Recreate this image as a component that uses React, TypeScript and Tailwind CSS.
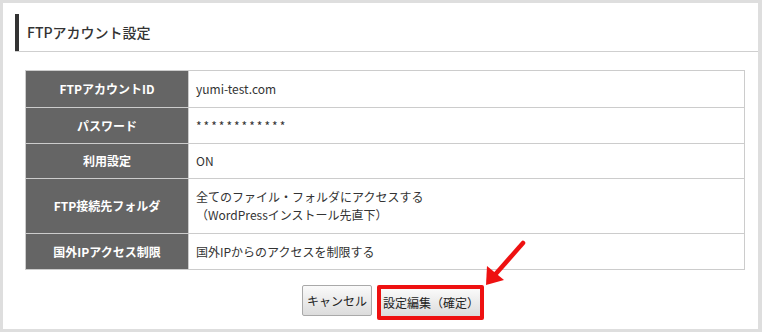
import React from "react";

const rows: { label: string; h: string; value: React.ReactNode }[] = [
  { label: "FTPアカウントID", h: "h-[37px]", value: "yumi-test.com" },
  { label: "パスワード", h: "h-[36px]", value: <span className="tracking-[2px]">************</span> },
  { label: "利用設定", h: "h-[35px]", value: "ON" },
  {
    label: "FTP接続先フォルダ",
    h: "h-[55px]",
    value: (
      <>
        <div>全てのファイル・フォルダにアクセスする</div>
        <div>（WordPressインストール先直下）</div>
      </>
    ),
  },
  { label: "国外IPアクセス制限", h: "h-[36px]", value: "国外IPからのアクセスを制限する" },
];

export default function App() {
  return (
    <div
      className="relative w-[762px] h-[332px] bg-[#dedede] pt-[3px] pl-[3px] pr-[4px] pb-[3px]"
      style={{ fontFamily: '"Noto Sans CJK JP", "Noto Sans", sans-serif' }}
    >
      <div className="bg-white h-full flex flex-col">
        <div className="mt-[11px] ml-[12px] border-b border-[#cfcfcf]">
          <div className="border-l-[4px] border-[#333] h-[37px] flex items-center pl-[8px] text-[14px] font-medium text-[#333]">
            FTPアカウント設定
          </div>
        </div>
        <table className="mt-[18px] ml-[22px] w-[720px] border-collapse text-[12px]">
          <tbody>
            {rows.map((r) => (
              <tr key={r.label} className={r.h}>
                <th className="w-[163px] bg-[#656565] text-white font-bold text-center border border-[#cccccc] p-0 leading-none">
                  {r.label}
                </th>
                <td className="border border-[#cccccc] pl-[7px] text-[#333] leading-[18px] align-middle">
                  {r.value}
                </td>
              </tr>
            ))}
          </tbody>
        </table>
        <div className="mt-[15px] flex items-start pl-[299px] gap-[5px]">
          <button className="w-[70px] h-[31px] border border-[#a9a9a9] rounded-[2px] bg-gradient-to-b from-[#fafafa] to-[#dcdcdc] text-[12px] text-[#222] leading-none whitespace-nowrap">
            キャンセル
          </button>
          <div className="w-[107px] h-[35px] border-[4px] border-[#ee1111] rounded-[2px] flex">
            <button className="flex-1 bg-gradient-to-b from-[#fafafa] to-[#dcdcdc] text-[12px] text-[#222] leading-none pl-[2px] text-left whitespace-nowrap">
              設定編集（確定）
            </button>
          </div>
        </div>
      </div>
      <svg className="absolute left-0 top-0 pointer-events-none" width="762" height="332" viewBox="0 0 762 332">
        <line x1="523" y1="243" x2="493" y2="277" stroke="#ee1111" strokeWidth="4.5" strokeLinecap="round" />
        <polygon points="486,285 487,266 504,280" fill="#ee1111" />
      </svg>
    </div>
  );
}
